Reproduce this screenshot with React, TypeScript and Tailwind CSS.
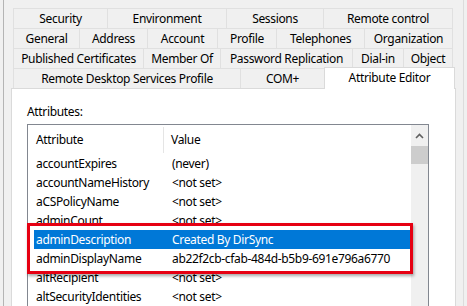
import clsx from "clsx";

// Attribute Editor tab of an AD user properties dialog
type TabDef = { label: string; w: string };

const tabRows: TabDef[][] = [
    [
        { label: "Security", w: "w-[94px]" },
        { label: "Environment", w: "w-[119px]" },
        { label: "Sessions", w: "w-[97px]" },
        { label: "Remote control", w: "w-[130px]" },
    ],
    [
        { label: "General", w: "w-[66px]" },
        { label: "Address", w: "w-[68px]" },
        { label: "Account", w: "w-[70px]" },
        { label: "Profile", w: "w-[59px]" },
        { label: "Telephones", w: "w-[88px]" },
        { label: "Organization", w: "w-[89px]" },
    ],
    [
        { label: "Published Certificates", w: "w-[130px]" },
        { label: "Member Of", w: "w-[77px]" },
        { label: "Password Replication", w: "w-[132px]" },
        { label: "Dial-in", w: "w-[51px]" },
        { label: "Object", w: "w-[50px]" },
    ],
];

const attributes = [
    { name: "accountExpires", value: "(never)" },
    { name: "accountNameHistory", value: "<not set>" },
    { name: "aCSPolicyName", value: "<not set>" },
    { name: "adminCount", value: "<not set>" },
    { name: "adminDescription", value: "Created By DirSync", selected: true },
    { name: "adminDisplayName", value: "ab22f2cb-cfab-484d-b5b9-691e796a6770" },
    { name: "altRecipient", value: "<not set>" },
    { name: "altSecurityIdentities", value: "<not set>" },
];

function Tab({ label, w, last }: TabDef & { last?: boolean }) {
    return (
        <div className={clsx("flex h-full items-center justify-center border-l border-t border-[#e0e0e0] bg-[#f0f0f0]", w, last && "border-r")}>
            {label}
        </div>
    );
}

export default function App() {
    return (
        <div className="relative flex h-[306px] w-[467px] overflow-hidden bg-[#f0f0f0] font-['Noto_Sans',sans-serif] text-[12px] tracking-[-0.33px] text-black">
            <div className="w-[3px]" />
            <div className="w-px bg-[#b4b4b4]" />
            <div className="w-[7px]" />

            <div className="flex w-[445px] flex-col pt-[8px]">
                {tabRows.map((row, i) => (
                    <div key={i} className="ml-[2px] flex h-[20px]">
                        {row.map((t, j) => (
                            <Tab key={t.label} {...t} last={j === row.length - 1} />
                        ))}
                    </div>
                ))}
                <div className="ml-[2px] flex h-[20px] items-end">
                    <Tab label="Remote Desktop Services Profile" w="w-[227px]" />
                    <Tab label="COM+" w="w-[84px]" />
                    <div className="relative z-10 -mb-px flex h-[22px] w-[131px] items-center justify-center border-x border-t border-[#dadada] bg-white pb-[2px]">
                        Attribute Editor
                    </div>
                </div>

                {/* page */}
                <div className="flex flex-1 flex-col border border-b-0 border-[#dadada] bg-white pl-[15px] pt-[15px]">
                    <div className="leading-[16px]">Attributes:</div>
                    <div className="mt-[4px] flex w-[402px] flex-1 border border-b-0 border-[#828790]">
                        <div className="flex flex-1 flex-col">
                            <div className="flex h-[29px] items-center">
                                <div className="flex h-[26px] w-[136px] items-center border-r border-[#e5e5e5] pl-[8px]">Attribute</div>
                                <div className="pl-[7px]">Value</div>
                            </div>
                            {attributes.map(a => (
                                <div key={a.name} className="flex h-[19px] pl-[6px] pr-px">
                                    <div className={clsx("flex flex-1 items-center", a.selected && "bg-[#0078d7] text-white")}>
                                        <div className="w-[130px] pl-[2px]">{a.name}</div>
                                        <div className="pl-[8px]">{a.value}</div>
                                    </div>
                                </div>
                            ))}
                        </div>
                        <div className="flex w-[17px] flex-col bg-[#f0f0f0]">
                            <div className="flex h-[21px] items-center justify-center">
                                <svg width="9" height="6" viewBox="0 0 9 6">
                                    <path d="M1 5 L4.5 1.5 L8 5" fill="none" stroke="#606060" strokeWidth="1.6" />
                                </svg>
                            </div>
                            <div className="h-[18px] bg-[#cdcdcd]" />
                        </div>
                    </div>
                </div>
            </div>

            <div className="w-[7px]" />
            <div className="w-px bg-[#dcdcdc]" />

            {/* annotation box around the two rows */}
            <div className="absolute left-[27px] top-[223px] h-[51px] w-[386px] border-[3px] border-[#e60012] shadow-[1px_2px_3px_rgba(0,0,0,0.35)]" />
        </div>
    );
}
